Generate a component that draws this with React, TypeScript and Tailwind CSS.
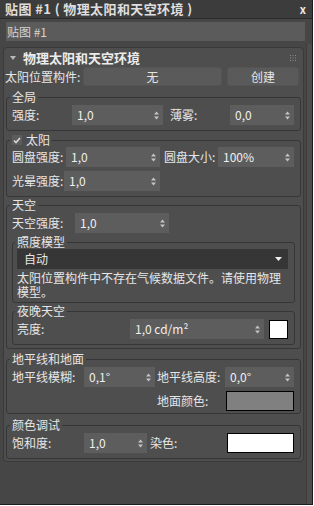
const Arrows = () => (
  <svg width="5" height="9" viewBox="0 0 5 9" className="shrink-0">
    <polygon points="0,3.5 5,3.5 2.5,0.5" fill="#c4c4c4" />
    <polygon points="0,5.5 5,5.5 2.5,8.5" fill="#c4c4c4" />
  </svg>
);

const Spin = ({ w, value }: { w: string; value: string }) => (
  <div className={`${w} h-[20px] bg-[#5d5d5d] flex items-center pl-[5px] pr-[4px] text-[#f0f0f0]`}>
    <span className="flex-1 whitespace-nowrap">{value}</span>
    <Arrows />
  </div>
);

const Group = ({
  title,
  className,
  legendClass,
  children,
}: {
  title: React.ReactNode;
  className: string;
  legendClass: string;
  children: React.ReactNode;
}) => (
  <fieldset className={`border border-[#363636] rounded-[3px] ${className}`}>
    <legend className={`px-[2px] leading-[14px] text-[12px] text-[#e6e6e6] ${legendClass}`}>{title}</legend>
    {children}
  </fieldset>
);

export default function App() {
  return (
    <div className="w-[314px] h-[506px] bg-white font-['Noto_Sans_CJK_SC',sans-serif] text-[12px] text-[#e6e6e6]">
      <div className="w-[313px] h-[505px] bg-[#464646] border-r border-b border-[#1c1c1c] flex flex-col">
        {/* title bar */}
        <div className="h-[19px] bg-[#3c3c3c] border-b border-[#2a2a2a] flex items-center pl-[5px] pr-[6px]">
          <span className="text-[13px] font-bold tracking-[0.4px] text-[#dedede] leading-[18px]">
            贴图 #1 ( 物理太阳和天空环境 )
          </span>
          <span className="ml-auto text-[11px] font-bold text-[#e8e8e8] leading-none">x</span>
        </div>

        <div className="flex">
          <div className="w-[306px] flex flex-col">
            {/* name field */}
            <div className="mt-[3px] ml-[6px] w-[299px] h-[19px] bg-[#5b5b5b] pl-[1px] leading-[19px] text-[#d4d4d4]">
              贴图 #1
            </div>

            {/* rollout */}
            <div className="mt-[6px] ml-[3px] w-[301px] bg-[#4e4e4e] border border-[#3a3a3a] rounded-[4px] pb-[2px]">
              <div className="h-[19px] flex items-center">
                <svg width="6" height="4" viewBox="0 0 6 4" className="ml-[6px]">
                  <polygon points="0,0 6,0 3,4" fill="#b8b8b8" />
                </svg>
                <span className="ml-[7px] text-[13px] font-bold text-[#ececec]">物理太阳和天空环境</span>
                <svg width="6" height="6" viewBox="0 0 6 6" className="ml-auto mr-[7px]">
                  {[0, 2.5, 5].map((x) =>
                    [0, 2.5, 5].map((y) => <rect key={`${x}-${y}`} x={x} y={y} width="1" height="1" fill="#8a8a8a" />)
                  )}
                </svg>
              </div>

              <div className="h-[19px] flex items-center">
                <span className="w-[79px] pl-[1px] whitespace-nowrap">太阳位置构件:</span>
                <div className="w-[139px] h-[19px] bg-[#5a5a5a] rounded-[3px] border border-[#545454] flex items-center justify-center">无</div>
                <div className="ml-[5px] w-[72px] h-[19px] bg-[#5a5a5a] rounded-[3px] border border-[#545454] flex items-center justify-center">创建</div>
              </div>

              {/* 全局 */}
              <Group title="全局" className="mt-[4px] ml-[2px] mr-[2px] pt-[1px] pb-[5px]" legendClass="ml-[3px]">
                <div className="flex items-center pl-[5px]">
                  <span className="w-[60px]">强度:</span>
                  <Spin w="w-[91px]" value="1,0" />
                  <span className="ml-[7px] w-[60px]">薄雾:</span>
                  <Spin w="w-[64px]" value="0,0" />
                </div>
              </Group>

              {/* 太阳 */}
              <Group
                title={
                  <span className="flex items-center">
                    <span className="w-[10px] h-[10px] bg-[#5c5c5c] flex items-center justify-center">
                      <svg width="8" height="7" viewBox="0 0 8 7">
                        <path d="M1 3.5 L3 5.5 L7 1" stroke="#d8d8d8" strokeWidth="1.6" fill="none" />
                      </svg>
                    </span>
                    <span className="ml-[4px]">太阳</span>
                  </span>
                }
                className="mt-[2px] ml-[2px] mr-[2px] pb-[5px]"
                legendClass="ml-[3px]"
              >
                <div className="flex items-center pl-[5px]">
                  <span className="w-[54px] whitespace-nowrap">圆盘强度:</span>
                  <Spin w="w-[94px]" value="1,0" />
                  <span className="ml-[4px] w-[54px] whitespace-nowrap">圆盘大小:</span>
                  <Spin w="w-[76px]" value="100%" />
                </div>
                <div className="flex items-center pl-[5px] mt-[4px]">
                  <span className="w-[52px] whitespace-nowrap">光晕强度:</span>
                  <Spin w="w-[96px]" value="1,0" />
                </div>
              </Group>

              {/* 天空 */}
              <Group title="天空" className="mt-[1px] ml-[2px] mr-[2px] pt-[1px] pb-[3px]" legendClass="ml-[3px]">
                <div className="flex items-center pl-[5px]">
                  <span className="w-[63px] whitespace-nowrap">天空强度:</span>
                  <Spin w="w-[94px]" value="1,0" />
                </div>

                <Group title="照度模型" className="mt-[2px] ml-[5px] w-[283px] pb-[3px]" legendClass="ml-[2px]">
                  <div className="ml-[4px] w-[271px] h-[20px] bg-[#363636] flex items-center pl-[7px] pr-[6px]">
                    <span className="flex-1">自动</span>
                    <svg width="7" height="4" viewBox="0 0 7 4">
                      <polygon points="0,0 7,0 3.5,4" fill="#f0f0f0" />
                    </svg>
                  </div>
                  <div className="mt-[2px] ml-[4px] w-[270px] leading-[14px]">
                    太阳位置构件中不存在气候数据文件。请使用物理模型。
                  </div>
                </Group>

                <Group title="夜晚天空" className="mt-[1px] ml-[5px] w-[283px] pt-[1px] pb-[5px]" legendClass="ml-[2px]">
                  <div className="flex items-center pl-[4px]">
                    <span className="w-[113px]">亮度:</span>
                    <Spin w="w-[134px]" value="1,0 cd/m²" />
                    <div className="ml-[5px] w-[19px] h-[19px] bg-white border border-black" />
                  </div>
                </Group>
              </Group>

              {/* 地平线和地面 */}
              <Group title="地平线和地面" className="mt-[3px] ml-[2px] mr-[2px] pt-[1px] pb-[2px]" legendClass="ml-[3px]">
                <div className="flex items-center pl-[5px]">
                  <span className="w-[72px] whitespace-nowrap">地平线模糊:</span>
                  <Spin w="w-[71px]" value="0,1°" />
                  <span className="ml-[2px] w-[68px] whitespace-nowrap">地平线高度:</span>
                  <Spin w="w-[69px]" value="0,0°" />
                </div>
                <div className="flex items-center pl-[5px] mt-[4px]">
                  <span className="w-[143px]" />
                  <span className="ml-[2px] w-[69px] whitespace-nowrap">地面颜色:</span>
                  <div className="w-[68px] h-[20px] bg-[#808080] border border-black" />
                </div>
              </Group>

              {/* 颜色调试 */}
              <Group title="颜色调试" className="mt-[4px] ml-[2px] mr-[2px] pt-[1px] pb-[5px]" legendClass="ml-[3px]">
                <div className="flex items-center pl-[5px]">
                  <span className="w-[72px]">饱和度:</span>
                  <Spin w="w-[63px]" value="1,0" />
                  <span className="ml-[3px] w-[77px]">染色:</span>
                  <div className="w-[67px] h-[20px] bg-white border border-black" />
                </div>
              </Group>
            </div>
          </div>

          {/* scroll strip */}
          <div className="mt-[25px] ml-[1px] w-[6px] h-[460px] bg-[#4d4d4d] border-l border-[#3c3c3c]" />
        </div>
      </div>
    </div>
  );
}
